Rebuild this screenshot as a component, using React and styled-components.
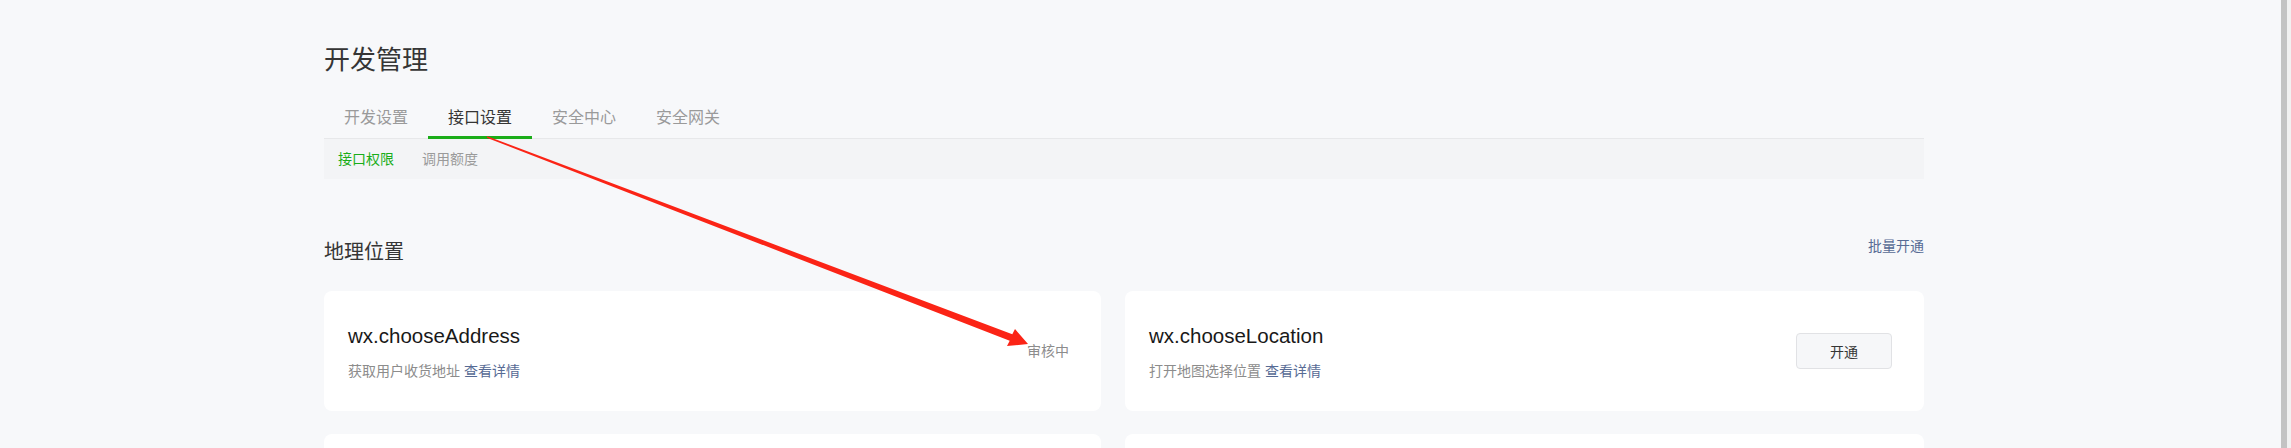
import React from 'react'
import styled, { createGlobalStyle } from 'styled-components'

const GlobalStyle = createGlobalStyle`
html, body {
  margin:0;
  padding:0;
  overflow:hidden;
  background:#f7f8fa;
}
body {
  font-family:"Liberation Sans", "Noto Sans CJK SC", sans-serif;
}
`

const tabs = ['开发设置', '接口设置', '安全中心', '安全网关']
const subTabs = ['接口权限', '调用额度']

const apis = [
  { name: 'wx.chooseAddress', desc: '获取用户收货地址', status: '审核中' },
  { name: 'wx.chooseLocation', desc: '打开地图选择位置' },
]

function App() {
  return (
    <Page>
      <GlobalStyle />
      <Main>
        <Content>
          <Title>开发管理</Title>
          <TabBar>
            {tabs.map((t, i) => (
              <Tab key={t} active={i === 1}>{t}</Tab>
            ))}
          </TabBar>
          <SubNav>
            {subTabs.map((t, i) => (
              <SubTab key={t} active={i === 0}>{t}</SubTab>
            ))}
          </SubNav>

          <SectionHead>
            <SectionTitle>地理位置</SectionTitle>
            <Link>批量开通</Link>
          </SectionHead>

          <Grid>
            {apis.map(a => (
              <Card key={a.name}>
                <div>
                  <ApiName>{a.name}</ApiName>
                  <Desc>{a.desc} <Link>查看详情</Link></Desc>
                </div>
                {a.status ? <Status>{a.status}</Status> : <OpenButton>开通</OpenButton>}
              </Card>
            ))}
            {/* next row, below the fold */}
            <Card />
            <Card />
          </Grid>
        </Content>
      </Main>
      <Scrollbar />

      {/* red annotation arrow drawn over the page */}
      <Overlay width="2291" height="448" viewBox="0 0 2291 448">
        <polygon
          fill="#fb2416"
          points="487.3,136.3 1012.3,334.2 1015,329 1028,344 1007,346 1009.7,340.8 486.7,137.7"
        />
      </Overlay>
    </Page>
  )
}

export default App

const Page = styled.div`
display:flex;
height:448px;
overflow:hidden;
position:relative;
`
const Main = styled.div`
flex:1;
`
const Content = styled.div`
width:1600px;
margin-left:324px;
padding-top:42px;
`
const Title = styled.h1`
margin:0;
font-size:26px;
line-height:36px;
font-weight:normal;
color:#353535;
`
const TabBar = styled.div`
display:flex;
margin-top:19px;
border-bottom:1px solid #e7e8ea;
`
const Tab = styled.div`
position:relative;
padding:0 20px;
font-size:16px;
line-height:41px;
color:${p => p.active ? '#353535' : '#9a9a9a'};
&::after{
  content:'';
  display:${p => p.active ? 'block' : 'none'};
  position:absolute;
  left:0;
  right:0;
  bottom:-1px;
  height:3px;
  background:#1aad19;
}
`
const SubNav = styled.div`
display:flex;
gap:28px;
height:40px;
padding:0 14px;
background:#f3f4f6;
`
const SubTab = styled.div`
font-size:14px;
line-height:40px;
color:${p => p.active ? '#1aad19' : '#9a9a9a'};
`
const SectionHead = styled.div`
display:flex;
justify-content:space-between;
align-items:flex-start;
margin-top:59px;
`
const SectionTitle = styled.h2`
margin:0;
font-size:20px;
line-height:28px;
font-weight:normal;
color:#353535;
`
const Link = styled.span`
font-size:14px;
line-height:20px;
color:#576b95;
cursor:pointer;
${SectionHead} & {
  margin-top:-2px;
}
`
const Grid = styled.div`
display:grid;
grid-template-columns:777px 799px;
column-gap:24px;
row-gap:23px;
margin-top:25px;
`
const Card = styled.div`
display:flex;
align-items:center;
justify-content:space-between;
height:120px;
box-sizing:border-box;
padding:0 32px 0 24px;
background:#fff;
border-radius:8px;
`
const ApiName = styled.div`
font-size:20.5px;
line-height:28px;
color:#191919;
`
const Desc = styled.div`
margin-top:11px;
font-size:14px;
line-height:20px;
color:#8c8c8c;
`
const Status = styled.span`
font-size:14px;
line-height:20px;
color:#8c8c8c;
`
const OpenButton = styled.button`
width:96px;
height:36px;
padding:0;
font-family:inherit;
font-size:14px;
color:#353535;
background:#f6f7f9;
border:1px solid #e1e2e5;
border-radius:4px;
`
const Scrollbar = styled.div`
width:10px;
flex-shrink:0;
box-sizing:border-box;
border-left:6px solid #c3c3c3;
background:#f1f1f1;
`
const Overlay = styled.svg`
position:absolute;
top:0;
left:0;
pointer-events:none;
`
